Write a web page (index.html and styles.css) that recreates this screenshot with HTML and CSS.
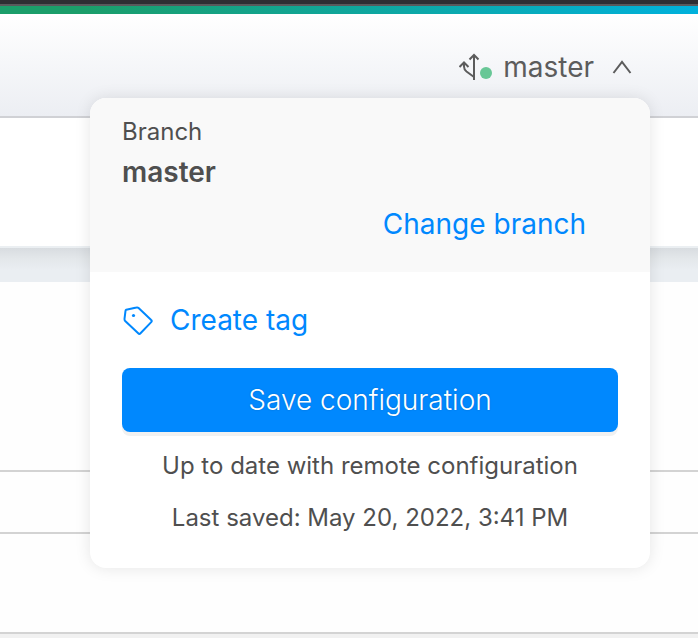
FILE: index.html
```
<!DOCTYPE html>
<html lang="en">
<head>
<meta charset="utf-8">
<meta name="viewport" content="width=device-width, initial-scale=1">
<title>Branch</title>
<link rel="stylesheet" href="styles.css">
</head>
<body>
<div class="topbar"></div>
<div class="accent"></div>
<header class="header">
  <button class="switcher" type="button" aria-expanded="true" aria-controls="branch-menu">
    <svg class="branch-icon" viewBox="0 0 36 32" aria-hidden="true">
      <path d="M15 29V4M10.500 8.500 15 4l4.500 4.500M15 26 7.500 20.500Q5 18.500 5 15.500V11.500M.500 16 5 11.500l4.500 4.500"/>
      <circle cx="27" cy="22" r="6"/>
    </svg>
    <span>master</span>
    <svg class="chevron" viewBox="0 0 20 16" aria-hidden="true"><path d="M1.500 14 10 3l8.500 11"/></svg>
  </button>
  <section class="menu" id="branch-menu">
    <div class="current">
      <p class="label">Branch</p>
      <p class="name">master</p>
      <a class="link change" href="#change">Change branch</a>
    </div>
    <div class="actions">
      <a class="link tag" href="#tag">
        <svg viewBox="0 0 32 32" aria-hidden="true">
          <path d="M4.200 5.800 14.500 3.500Q15.700 3.200 16.600 4L29.200 16Q30.300 17 29.200 18.100L18.500 29.300Q17.400 30.500 16.200 29.300L3.200 17Q2.300 16 2.500 14.800L3.500 6.800Q3.600 6 4.200 5.800Z"/>
          <circle cx="11.500" cy="11.500" r="1.600"/>
        </svg>
        <span>Create tag</span>
      </a>
      <button class="save" type="button">Save configuration</button>
      <p class="status">Up to date with remote configuration</p>
      <p class="status">Last saved: May 20, 2022, 3:41 PM</p>
    </div>
  </section>
</header>
<main>
  <div class="toolbar"></div>
  <div class="divider"></div>
  <div class="panel"></div>
  <div class="row"></div>
  <div class="block"></div>
</main>
</body>
</html>
```
FILE: styles.css
```
* {
  box-sizing: border-box;
}

body {
  margin: 0;
  min-height: 100vh;
  overflow: hidden;
  background: #f1f1f1;
  color: #4f4f4f;
  font-family: Inter, "Liberation Sans", sans-serif;
  font-size: 28px;
  font-weight: 400;
  line-height: 40px;
}

p {
  margin: 0;
}

.topbar {
  height: 6px;
  background: #2e2e33;
  border-bottom: 2px solid #59595c;
}

.accent {
  height: 8px;
  background: linear-gradient(90deg, #1b9e6a, #1b9e6a 12%, #00b1dc);
}

.header {
  position: relative;
  display: flex;
  justify-content: flex-end;
  align-items: center;
  height: 104px;
  padding: 4px 64px 0;
  background: linear-gradient(#fff, #eceef3);
  border-bottom: 2px solid #d0d1d5;
}

.switcher {
  display: flex;
  align-items: center;
  gap: 8px;
  padding: 0;
  border: 0;
  background: none;
  color: #5c5c5c;
  font: inherit;
  cursor: pointer;
}

.branch-icon {
  width: 36px;
  height: 32px;
  fill: none;
  stroke: #5c5c5c;
  stroke-width: 2;
}

.branch-icon circle {
  fill: #68c796;
  stroke: none;
}

.chevron {
  width: 20px;
  height: 16px;
  margin: 0 2px 0 10px;
  fill: none;
  stroke: #5c5c5c;
  stroke-width: 2;
}

.menu {
  position: absolute;
  z-index: 1;
  top: 84px;
  right: 48px;
  width: 560px;
  overflow: hidden;
  border-radius: 16px;
  background: #fff;
  box-shadow: 0 0 16px rgba(0, 0, 0, 0.1);
}

.current {
  display: flex;
  flex-direction: column;
  padding: 14px 32px 28px;
  background: #f9f9f9;
}

.label {
  font-size: 24px;
}

.name {
  font-weight: 600;
}

.link {
  color: #0088fe;
  text-decoration: none;
}

.change {
  align-self: flex-end;
  margin: 12px 32px 0;
}

.actions {
  padding: 28px 32px 30px;
}

.tag {
  display: flex;
  align-items: center;
  gap: 16px;
}

.tag svg {
  width: 32px;
  height: 32px;
  fill: none;
  stroke: #0088fe;
  stroke-width: 2;
}

.tag circle {
  fill: #0088fe;
  stroke: none;
}

.save {
  display: block;
  width: 100%;
  height: 64px;
  margin: 28px 0 14px;
  padding: 0;
  border: 0;
  border-radius: 8px;
  background: #0088fe;
  box-shadow: 0 4px 0 #f1f1f1;
  color: #fff;
  font: inherit;
  font-weight: 300;
  text-shadow: 0 0 2px rgba(0, 0, 0, 0.2);
  cursor: pointer;
}

.status {
  font-size: 24px;
  text-align: center;
}

.status + .status {
  margin-top: 12px;
}

.toolbar {
  height: 130px;
  background: #fff;
  border-bottom: 2px solid #ebeff2;
}

.divider {
  height: 34px;
  background: linear-gradient(#d8dce0, #e3e7ea 30%, #eaeef2 65%);
}

.panel,
.row,
.block {
  background: #fefefe;
  border-bottom: 2px solid #d3d3d3;
}

.panel {
  height: 190px;
}

.row {
  height: 62px;
}

.block {
  height: 100px;
}
```
